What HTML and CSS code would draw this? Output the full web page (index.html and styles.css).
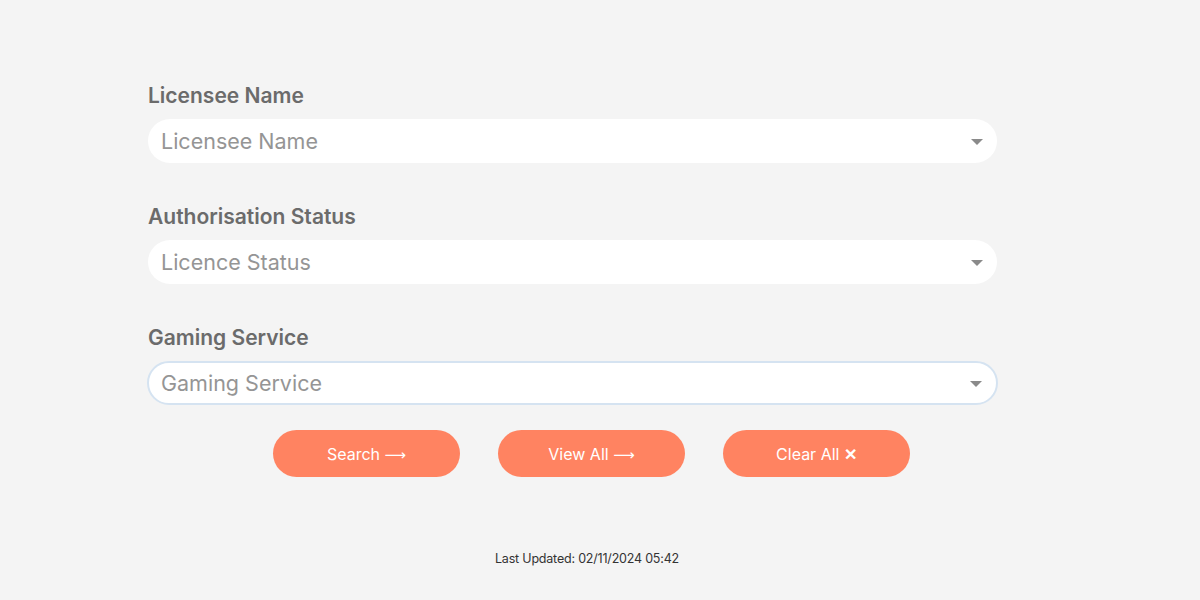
FILE: index.html
```html
<!DOCTYPE html>
<html lang="en">
<head>
    <meta charset="UTF-8">
    <title>Licence Register</title>
    <link rel="stylesheet" href="styles.css">
</head>
<body>

<div class="register">
    <form class="search-form">
        <div class="field">
            <label for="licensee">Licensee Name</label>
            <div class="select">
                <span class="placeholder">Licensee Name</span>
                <span class="caret"></span>
            </div>
        </div>
        <div class="field">
            <label for="status">Authorisation Status</label>
            <div class="select">
                <span class="placeholder">Licence Status</span>
                <span class="caret"></span>
            </div>
        </div>
        <div class="field">
            <label for="service">Gaming Service</label>
            <div class="select focused">
                <span class="placeholder">Gaming Service</span>
                <span class="caret"></span>
            </div>
        </div>
        <div class="actions">
            <button type="button" class="btn">Search <span class="arrow">&#10230;</span></button>
            <button type="button" class="btn">View All <span class="arrow">&#10230;</span></button>
            <button type="button" class="btn">Clear All <span class="x">&#10005;</span></button>
        </div>
    </form>
    <div class="updated">Last Updated: 02/11/2024 05:42</div>
</div>

</body>
</html>
```

FILE: styles.css
```css
body {
    margin: 0;
    background-color: #f4f4f4;
    font-family: 'Inter', 'Liberation Sans', sans-serif;
}
.register {
    width: 849px;
    padding: 82px 0 0 148px;
}
.field {
    display: flex;
    flex-direction: column;
    margin-bottom: 40px;
}
.field label {
    font-size: 21px;
    font-weight: 600;
    color: #6b6b6b;
    height: 28px;
    line-height: 28px;
    margin-bottom: 9px;
}
.select {
    height: 44px;
    background: #fff;
    border-radius: 22px;
    display: flex;
    align-items: center;
    justify-content: space-between;
    padding: 0 14px 0 13px;
    box-sizing: border-box;
}
.select.focused {
    border: 2px solid #d5e3f1;
    width: 851px;
    margin-left: -1px;
    padding-left: 12px;
    border-radius: 23px;
}
.placeholder {
    font-size: 21.5px;
    color: #959595;
}
.caret {
    width: 0;
    height: 0;
    border-left: 6px solid transparent;
    border-right: 6px solid transparent;
    border-top: 6px solid #8a8a8a;
    margin-top: 2px;
}
.actions {
    display: flex;
    gap: 38px;
    padding-left: 125px;
    margin-top: -15px;
}
.btn {
    width: 187px;
    height: 47px;
    border: none;
    border-radius: 24px;
    background-color: #ff8361;
    color: #fff;
    font-family: inherit;
    font-size: 16px;
    cursor: pointer;
}
.btn .arrow {
    font-family: 'DejaVu Sans', sans-serif;
    font-size: 15px;
}
.btn .x {
    font-weight: bold;
}
.updated {
    margin-top: 74px;
    padding-left: 347px;
    font-size: 12.5px;
    letter-spacing: -0.2px;
    color: #333;
}
```
